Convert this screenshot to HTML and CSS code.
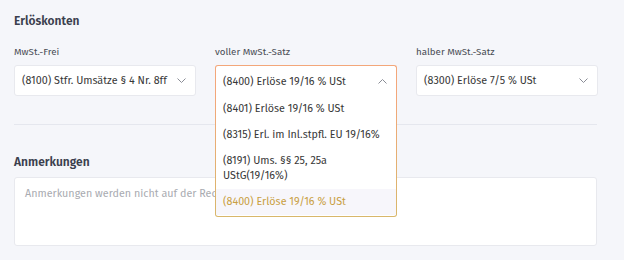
FILE: index.html
```html
<!DOCTYPE html>
<html lang="de">
<head>
    <meta charset="UTF-8">
    <title>Erlöskonten</title>
    <link rel="stylesheet" href="styles.css">
</head>
<body>
    <section class="abschnitt">
        <h2>Erlöskonten</h2>
        <div class="felder">
            <div class="feld">
                <label>MwSt.-Frei</label>
                <div class="auswahl">
                    <span>(8100) Stfr. Umsätze § 4 Nr. 8ff</span>
                    <svg class="pfeil" width="9" height="5" viewBox="0 0 9 5"><path d="M0.5 0.5l4 4 4-4" fill="none" stroke="#8a8d96" stroke-width="1"/></svg>
                </div>
            </div>
            <div class="feld">
                <label>voller MwSt.-Satz</label>
                <div class="auswahl-wrap">
                    <div class="auswahl offen">
                        <span>(8400) Erlöse 19/16 % USt</span>
                        <svg class="pfeil" width="9" height="5" viewBox="0 0 9 5"><path d="M0.5 4.5l4-4 4 4" fill="none" stroke="#8a8d96" stroke-width="1"/></svg>
                    </div>
                    <ul class="liste">
                        <li>(8401) Erlöse 19/16 % USt</li>
                        <li>(8315) Erl. im Inl.stpfl. EU 19/16%</li>
                        <li>(8191) Ums. §§ 25, 25a<br>UStG(19/16%)</li>
                        <li class="aktiv">(8400) Erlöse 19/16 % USt</li>
                    </ul>
                </div>
            </div>
            <div class="feld">
                <label>halber MwSt.-Satz</label>
                <div class="auswahl">
                    <span>(8300) Erlöse 7/5 % USt</span>
                    <svg class="pfeil" width="9" height="5" viewBox="0 0 9 5"><path d="M0.5 0.5l4 4 4-4" fill="none" stroke="#8a8d96" stroke-width="1"/></svg>
                </div>
            </div>
        </div>
    </section>
    <hr class="trenner">
    <section class="abschnitt">
        <h2 class="klein">Anmerkungen</h2>
        <textarea class="notiz" placeholder="Anmerkungen werden nicht auf der Rechnung angezeigt"></textarea>
    </section>
</body>
</html>
```

FILE: styles.css
```css
body {
    font-family: 'Fira Sans', 'Inter', sans-serif;
    margin: 0;
    padding: 14px 27px 0 14px;
    background: #f5f6fa;
    color: #3a3d47;
}
h2 {
    font-size: 12px;
    font-weight: 600;
    margin: 0 0 17px;
    line-height: 14px;
    color: #3b3f4e;
}
h2.klein {
    margin-bottom: 8px;
}
.felder {
    display: grid;
    grid-template-columns: 182px 182px 182px;
    column-gap: 19px;
}
.feld label {
    display: block;
    font-size: 9.75px;
    color: #4a4d55;
    line-height: 14px;
    margin-bottom: 6px;
}
.auswahl {
    box-sizing: border-box;
    display: flex;
    align-items: center;
    justify-content: space-between;
    height: 31px;
    padding: 0 9px 0 7px;
    background: white;
    border: 1px solid #e8e9ee;
    border-radius: 3px;
    font-size: 10.75px;
    color: #383838;
    white-space: nowrap;
}
.pfeil {
    flex-shrink: 0;
}
.auswahl-wrap {
    position: relative;
}
.auswahl.offen {
    border-color: #f3a77a;
    border-bottom: none;
    border-radius: 3px 3px 0 0;
}
.liste {
    position: absolute;
    top: 31px;
    left: 0;
    right: 0;
    margin: 0;
    padding: 0 0 1px;
    list-style: none;
    border: 1px solid transparent;
    border-top: none;
    border-radius: 0 0 3px 3px;
    background: linear-gradient(white, white) padding-box,
                linear-gradient(#f3a77a, #d8b76a) border-box;
    font-size: 10.75px;
    color: #383838;
    z-index: 2;
}
.liste li {
    padding: 5px 7px 6px;
    line-height: 15px;
}
.liste li.aktiv {
    background: #f7f6fb;
    color: #c9a043;
}
.trenner {
    border: none;
    border-top: 1px solid #e5e7ee;
    margin: 28px 0 30px 0;
}
.notiz {
    display: block;
    box-sizing: border-box;
    width: 583px;
    height: 69px;
    padding: 9px 10px;
    border: 1px solid #e8e9ee;
    border-radius: 3px;
    background: white;
    font-family: inherit;
    font-size: 10.75px;
    resize: none;
}
.notiz::placeholder {
    color: #a9abb1;
}
```
